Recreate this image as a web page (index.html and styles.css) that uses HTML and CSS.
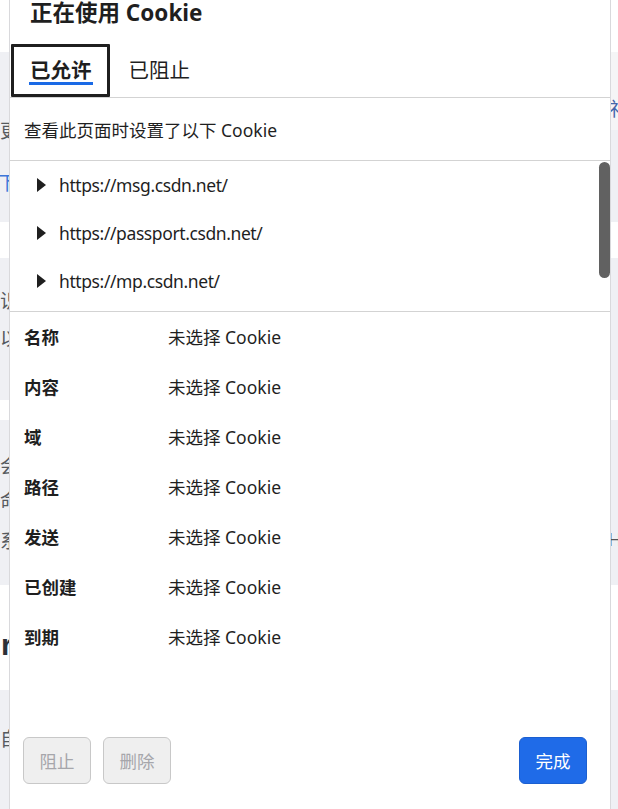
FILE: index.html
```html
<!DOCTYPE html>
<html lang="zh-CN">
<head>
<meta charset="utf-8">
<title>正在使用 Cookie</title>
<link rel="stylesheet" href="styles.css">
</head>
<body>
<div class="page">
  <div class="band white h52"></div>
  <div class="band grey h170">
    <div class="col-left">
      <div class="frag f-geng">更</div>
      <div class="frag link f-xia">下</div>
    </div>
    <div class="col-right">
      <div class="light-top"><span class="frag link f-shi">礻</span></div>
    </div>
  </div>
  <div class="band white h36"></div>
  <div class="band grey h142">
    <div class="col-left">
      <div class="frag f-ren">识</div>
      <div class="frag f-yi">以</div>
    </div>
    <div class="col-right"></div>
  </div>
  <div class="band white h20"></div>
  <div class="band grey h165">
    <div class="col-left">
      <div class="frag f-hui">会</div>
      <div class="frag f-ming">命</div>
      <div class="frag f-xi">系</div>
    </div>
    <div class="col-right">
      <div class="frag f-h">H</div>
    </div>
  </div>
  <div class="band white h105">
    <div class="col-left">
      <div class="frag heading f-r">r</div>
    </div>
  </div>
  <div class="band grey h119">
    <div class="col-left">
      <div class="frag f-zi">自</div>
    </div>
  </div>
</div>

<div class="dialog" role="dialog" aria-label="正在使用 Cookie">
  <div class="title">正在使用 Cookie</div>
  <div class="tabs">
    <div class="tab focused"><span class="tab-label active">已允许</span></div>
    <div class="tab"><span class="tab-label">已阻止</span></div>
  </div>
  <div class="intro">查看此页面时设置了以下 Cookie</div>
  <div class="tree">
    <div class="tree-item"><span class="caret"></span><span class="url">https://msg.csdn.net/</span></div>
    <div class="tree-item"><span class="caret"></span><span class="url">https://passport.csdn.net/</span></div>
    <div class="tree-item"><span class="caret"></span><span class="url">https://mp.csdn.net/</span></div>
    <div class="thumb"></div>
  </div>
  <div class="details">
    <div class="row"><span class="label">名称</span><span class="value">未选择 Cookie</span></div>
    <div class="row"><span class="label">内容</span><span class="value">未选择 Cookie</span></div>
    <div class="row"><span class="label">域</span><span class="value">未选择 Cookie</span></div>
    <div class="row"><span class="label">路径</span><span class="value">未选择 Cookie</span></div>
    <div class="row"><span class="label">发送</span><span class="value">未选择 Cookie</span></div>
    <div class="row"><span class="label">已创建</span><span class="value">未选择 Cookie</span></div>
    <div class="row"><span class="label">到期</span><span class="value">未选择 Cookie</span></div>
  </div>
  <div class="actions">
    <button class="btn disabled" disabled>阻止</button>
    <button class="btn disabled" disabled>删除</button>
    <span class="spacer"></span>
    <button class="btn primary">完成</button>
  </div>
</div>
</body>
</html>
```

FILE: styles.css
```css
html, body {
  margin: 0;
  padding: 0;
}
body {
  width: 618px;
  height: 809px;
  overflow: hidden;
  position: relative;
  background: #ffffff;
  font-family: "Noto Sans", "Noto Sans CJK SC", sans-serif;
  color: #1f1f1f;
}

/* background page */
.page {
  display: flex;
  flex-direction: column;
}
.band {
  display: flex;
  justify-content: space-between;
}
.white { background: #ffffff; }
.grey { background: #eff0f4; }
.h52 { height: 52px; }
.h170 { height: 170px; }
.h36 { height: 36px; }
.h142 { height: 142px; }
.h20 { height: 20px; }
.h165 { height: 165px; }
.h105 { height: 105px; }
.h119 { height: 119px; }

.col-left {
  display: flex;
  flex-direction: column;
}
.col-right {
  width: 10px;
  display: flex;
  flex-direction: column;
}
.light-top {
  height: 78px;
  background: #f5f5f6;
}
.frag {
  font-family: "Noto Sans CJK SC", sans-serif;
  font-size: 19px;
  line-height: 24px;
  color: #555a60;
  white-space: nowrap;
}
.link { color: #3d77d9; }
.f-geng { margin-top: 66px; }
.f-xia { margin-top: 28px; margin-left: -2px; }
.f-shi { display: block; margin-top: 44px; color: #4466aa; }
.f-ren { margin-top: 30px; }
.f-yi { margin-top: 14px; }
.f-hui { margin-top: 33px; }
.f-ming { margin-top: 11px; }
.f-xi { margin-top: 16px; }
.f-h { margin-top: 108px; color: #555; font-family: "Liberation Sans", sans-serif; }
.heading {
  font-family: "Liberation Sans", sans-serif;
  font-weight: 700;
  font-size: 30px;
  line-height: 34px;
  color: #2d3138;
}
.f-r { margin-top: 43px; margin-left: 1px; }
.f-zi { margin-top: 36px; }

/* dialog */
.dialog {
  position: absolute;
  top: 0;
  left: 9px;
  width: 600px;
  height: 809px;
  background: #ffffff;
  border-left: 1px solid #d9d9dc;
  border-right: 1px solid #d9d9dc;
  display: flex;
  flex-direction: column;
  font-size: 17.5px;
}
.title {
  font-size: 22.5px;
  font-weight: 700;
  line-height: 25px;
  height: 25px;
  padding-left: 20px;
  color: #1f1f1f;
  white-space: nowrap;
}
.tabs {
  display: flex;
  margin-top: 19px;
  height: 53px;
  border-bottom: 1px solid #d3d3d3;
}
.tab {
  box-sizing: border-box;
  height: 53px;
  border: 3px solid transparent;
  padding: 11px 17px 0 16px;
  font-size: 20.5px;
  display: flex;
  align-items: flex-start;
  white-space: nowrap;
  flex: none;
}
.tab.focused {
  margin-left: 1px;
  border-color: #1f1f1f;
  padding-left: 16px;
  padding-right: 14px;
  border-radius: 1px;
}
.tab-label {
  line-height: 24px;
  border-bottom: 3px solid transparent;
  color: #1f1f1f;
  white-space: nowrap;
}
.tab-label.active {
  font-weight: 700;
  border-bottom-color: #1a6ae6;
  padding: 0 1px;
  margin-left: -1px;
}
.intro {
  height: 62px;
  display: flex;
  align-items: center;
  padding-left: 14px;
  border-bottom: 1px solid #d3d3d3;
}
.tree {
  height: 150px;
  overflow: hidden;
  position: relative;
  border-bottom: 1px solid #d3d3d3;
}
.tree-item {
  height: 48px;
  display: flex;
  align-items: center;
  padding-left: 27px;
}
.caret {
  width: 0;
  height: 0;
  border-left: 9px solid #1f1f1f;
  border-top: 7px solid transparent;
  border-bottom: 7px solid transparent;
  margin-right: 13px;
}
.url {
  color: #1f1f1f;
  letter-spacing: -0.4px;
}
.thumb {
  position: absolute;
  top: 1px;
  right: 0;
  width: 11px;
  height: 116px;
  border-radius: 6px;
  background: #616161;
}
.details {
  display: flex;
  flex-direction: column;
}
.row {
  height: 50px;
  display: flex;
  align-items: center;
  padding-left: 14px;
  padding-bottom: 2px;
  box-sizing: border-box;
}
.label {
  width: 144px;
  font-weight: 700;
}
.actions {
  margin-top: auto;
  padding: 0 23px 25px 13px;
  display: flex;
  gap: 12px;
}
.spacer { flex: 1; }
.btn {
  box-sizing: border-box;
  width: 68px;
  height: 47px;
  border-radius: 6px;
  font-family: "Noto Sans CJK SC", sans-serif;
  font-size: 17.5px;
  padding: 0;
}
.btn.disabled {
  background: #efefef;
  border: 1px solid #c8c8c8;
  color: #a6a6ab;
}
.btn.primary {
  background: #1f6be8;
  border: 1px solid #1b5fd0;
  color: #ffffff;
}
```
